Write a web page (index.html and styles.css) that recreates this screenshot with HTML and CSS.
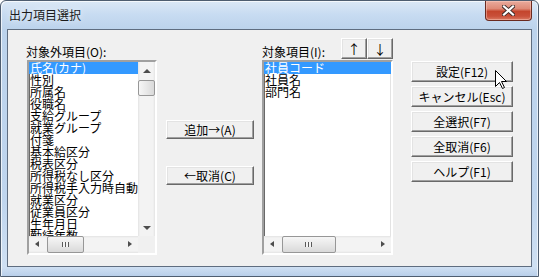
FILE: index.html
```html
<!DOCTYPE html>
<html lang="ja">
<head>
    <meta charset="UTF-8">
    <meta name="viewport" content="width=device-width, initial-scale=1.0">
    <title>出力項目選択</title>
    <link rel="stylesheet" href="styles.css">
</head>
<body>
    <div class="window">
        <div class="titlebar">
            <span class="title">出力項目選択</span>
            <div class="close-btn">
                <svg width="13" height="11" viewBox="0 0 13 11">
                    <path d="M2 1.5 L11 9.5 M11 1.5 L2 9.5" stroke="#3b2a28" stroke-width="4" stroke-linecap="square"/>
                    <path d="M2 1.5 L11 9.5 M11 1.5 L2 9.5" stroke="#fff" stroke-width="2.2" stroke-linecap="square"/>
                </svg>
            </div>
        </div>

        <div class="client">
            <!-- 対象外 -->
            <div class="col col-left">
                <div class="label">対象外項目(O):</div>
                <div class="listbox with-vscroll">
                    <ul class="items">
                        <li class="selected">氏名(カナ)</li>
                        <li>性別</li>
                        <li>所属名</li>
                        <li>役職名</li>
                        <li>支給グループ</li>
                        <li>就業グループ</li>
                        <li>付箋</li>
                        <li>基本給区分</li>
                        <li>税表区分</li>
                        <li>所得税なし区分</li>
                        <li>所得税手入力時自動</li>
                        <li>就業区分</li>
                        <li>従業員区分</li>
                        <li>生年月日</li>
                        <li>勤続年数</li>
                    </ul>
                    <div class="vscroll">
                        <div class="arrow arrow-up"></div>
                        <div class="track">
                            <div class="thumb"></div>
                        </div>
                        <div class="arrow arrow-down"></div>
                    </div>
                    <div class="hscroll">
                        <div class="arrow arrow-left"></div>
                        <div class="track">
                            <div class="thumb thumb-left"></div>
                        </div>
                        <div class="arrow arrow-right"></div>
                    </div>
                    <div class="corner"></div>
                </div>
            </div>

            <div class="col col-mid">
                <div class="btn btn-mid">追加→(A)</div>
                <div class="btn btn-mid">←取消(C)</div>
            </div>

            <!-- 対象 -->
            <div class="col col-right">
                <div class="head-row">
                    <div class="label">対象項目(I):</div>
                    <div class="btn btn-arrow">↑</div>
                    <div class="btn btn-arrow">↓</div>
                </div>
                <div class="listbox">
                    <ul class="items">
                        <li class="selected">社員コード</li>
                        <li>社員名</li>
                        <li>部門名</li>
                    </ul>
                    <div class="hscroll">
                        <div class="arrow arrow-left"></div>
                        <div class="track">
                            <div class="thumb thumb-right"></div>
                        </div>
                        <div class="arrow arrow-right"></div>
                    </div>
                </div>
            </div>

            <div class="col col-buttons">
                <div class="btn btn-side">設定(F12)</div>
                <div class="btn btn-side">キャンセル(Esc)</div>
                <div class="btn btn-side">全選択(F7)</div>
                <div class="btn btn-side">全取消(F6)</div>
                <div class="btn btn-side">ヘルプ(F1)</div>
            </div>
        </div>

        <svg class="cursor" width="13" height="20" viewBox="0 0 13 20">
            <path d="M0.5 0.5 L0.5 16.5 L4.5 12.5 L7.5 18.5 L9.5 17.5 L6.5 11.5 L11.5 11.5 Z" fill="#fff" stroke="#000" stroke-width="1" stroke-linejoin="miter"/>
        </svg>
    </div>
</body>
</html>
```

FILE: styles.css
```css
* {
    box-sizing: border-box;
}
body {
    margin: 0;
    background: #fff;
    font-family: "Noto Sans CJK JP", "Noto Sans", sans-serif;
    font-size: 12px;
    color: #000;
}
.window {
    position: relative;
    width: 539px;
    height: 277px;
    padding: 0 6px 9px 6px;
    border: 1px solid #4e5d70;
    border-radius: 6px 6px 0 0;
    background: linear-gradient(180deg, #dbe8f6 0, #c7dbf1 14px, #bcd3ec 28px, #bfd5ee 200px, #cfe0f3 266px, #b6cde9 276px);
    box-shadow: inset 1px 1px 0 rgba(255, 255, 255, 0.7), inset -1px 0 0 rgba(255, 255, 255, 0.6);
}
.titlebar {
    display: flex;
    justify-content: space-between;
    align-items: flex-start;
    height: 28px;
}
.title {
    margin: 6px 0 0 2px;
    line-height: 16px;
    color: #1b1b1b;
    text-shadow: 0 0 6px rgba(255, 255, 255, 0.9);
}
.close-btn {
    display: flex;
    align-items: center;
    justify-content: center;
    width: 47px;
    height: 20px;
    border: 1px solid #6a2a20;
    border-top: none;
    border-radius: 0 0 4px 4px;
    background: linear-gradient(180deg, #e9ab9d 0, #de8a77 40%, #c4452d 55%, #c9503a 80%, #da7a62 100%);
    box-shadow: inset 0 0 0 1px rgba(255, 210, 200, 0.45);
}

/* client area */
.client {
    display: flex;
    align-items: flex-start;
    height: 238px;
    padding: 8px 0 0 18px;
    border: 1px solid #5f6d80;
    background: #f0f0f0;
}
.col-left {
    width: 131px;
    padding-top: 6px;
}
.col-left .listbox {
    margin-left: 1px;
    width: 130px;
}
.col-mid {
    display: flex;
    flex-direction: column;
    gap: 27px;
    width: 88px;
    margin-left: 9px;
    padding-top: 82px;
}
.col-right {
    width: 131px;
    margin-left: 8px;
}
.col-buttons {
    display: flex;
    flex-direction: column;
    gap: 4px;
    width: 102px;
    margin-left: 18px;
    padding-top: 23px;
}
.label {
    line-height: 16px;
    height: 16px;
    white-space: nowrap;
}
.head-row {
    display: flex;
    align-items: flex-end;
    height: 22px;
}
.head-row .label {
    flex: 1;
}
.head-row .btn-arrow {
    align-self: flex-start;
}

/* buttons */
.btn {
    display: flex;
    align-items: center;
    justify-content: center;
    background: #f0f0f0;
    border: 1px solid;
    border-color: #fff #696969 #696969 #fff;
    box-shadow: inset -1px -1px 0 #a0a0a0, inset 1px 1px 0 #e3e3e3;
    white-space: nowrap;
    line-height: 12px;
}
.btn-mid {
    height: 19px;
}
.btn-side {
    height: 21px;
}
.btn-arrow {
    width: 26px;
    height: 21px;
    font-size: 13px;
}

/* listbox */
.listbox {
    display: grid;
    grid-template-columns: 1fr;
    grid-template-rows: 1fr 17px;
    height: 195px;
    border: 2px solid;
    border-color: #a0a0a0 #fff #fff #a0a0a0;
    box-shadow: inset 1px 1px 0 #696969, inset -1px -1px 0 #e3e3e3;
    background: #fff;
}
.listbox.with-vscroll {
    grid-template-columns: 1fr 17px;
}
.items {
    margin: 0;
    padding: 0;
    list-style: none;
    overflow: hidden;
}
.items li {
    height: 12px;
    line-height: 12px;
    padding-left: 1px;
    white-space: nowrap;
}
.items li.selected {
    background: #3399ff;
    color: #fff;
}
.corner {
    background: #f0f0f0;
}

/* scrollbars */
.vscroll,
.hscroll {
    display: flex;
    background: #f0f0f0;
}
.vscroll {
    flex-direction: column;
    background: linear-gradient(90deg, #e3e3e3 0, #f3f3f3 2px, #f3f3f3 15px, #e3e3e3 17px);
}
.hscroll {
    background: linear-gradient(180deg, #e3e3e3 0, #f3f3f3 2px, #f3f3f3 15px, #e3e3e3 17px);
}
.track {
    flex: 1;
    display: flex;
}
.vscroll .track {
    flex-direction: column;
    padding-top: 1px;
}
.hscroll .track {
    padding-left: 1px;
}
.arrow {
    position: relative;
    width: 17px;
    height: 17px;
}
.arrow::after {
    content: "";
    position: absolute;
    width: 0;
    height: 0;
    border: 4px solid transparent;
}
.arrow-up::after {
    left: 5px;
    top: 3px;
    border-bottom-color: #4d4d4d;
}
.arrow-down::after {
    left: 5px;
    top: 7px;
    border-top-color: #4d4d4d;
}
.arrow-left::after {
    left: 2px;
    top: 5px;
    border-width: 3.5px 4px;
    border-right-color: #4d4d4d;
}
.arrow-right::after {
    left: 7px;
    top: 5px;
    border-width: 3.5px 4px;
    border-left-color: #4d4d4d;
}
.thumb {
    position: relative;
    border: 1px solid #979797;
    border-radius: 2px;
}
.vscroll .thumb {
    height: 16px;
    width: 17px;
    background: linear-gradient(90deg, #f6f6f6, #e8e8e8 50%, #d9d9d9);
}
.hscroll .thumb {
    height: 17px;
    background: linear-gradient(180deg, #f6f6f6, #e8e8e8 50%, #d9d9d9);
}
.hscroll .thumb::after {
    content: "";
    position: absolute;
    left: 50%;
    top: 5px;
    width: 7px;
    height: 5px;
    margin-left: -4px;
    background: repeating-linear-gradient(90deg, #5a5a5a 0, #5a5a5a 1px, #f4f4f4 1px, #f4f4f4 3px);
}
.thumb-left {
    width: 37px;
}
.thumb-right {
    width: 54px;
}

.cursor {
    position: absolute;
    left: 494px;
    top: 69px;
}
```
